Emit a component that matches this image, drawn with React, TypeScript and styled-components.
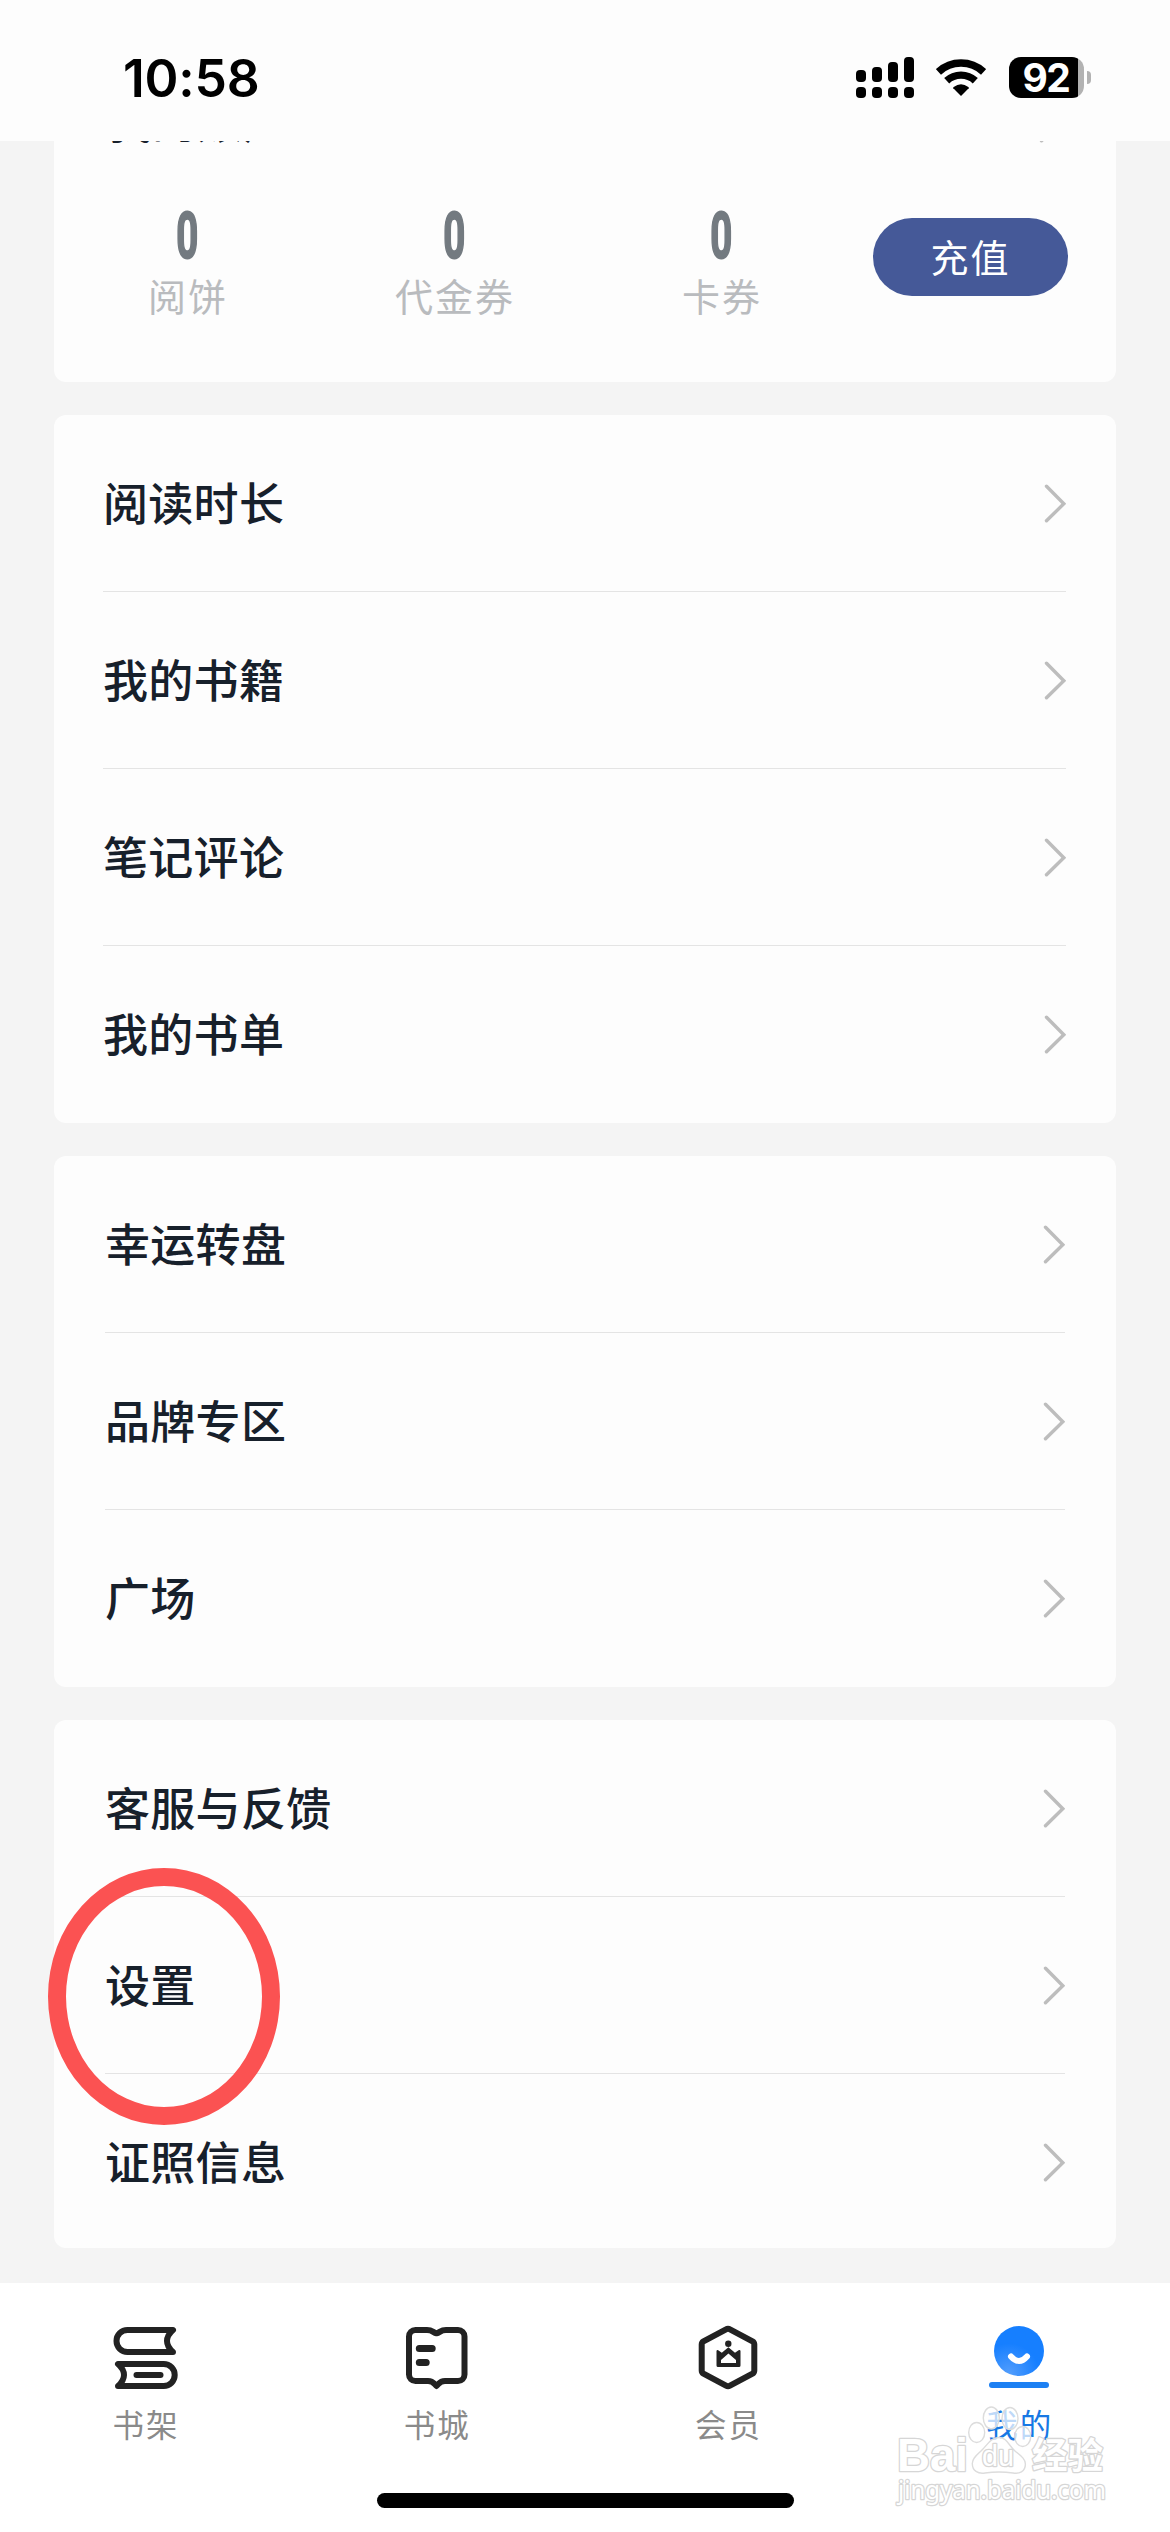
import React from 'react';
import styled, { createGlobalStyle } from 'styled-components';

const GlobalStyle = createGlobalStyle`
  * { box-sizing: border-box; }
  body {
    margin: 0;
    background: #f4f4f4;
    font-family: "Noto Sans CJK SC", "Noto Sans", sans-serif;
  }
`;

const Screen = styled.div`
  position: relative;
  display: flex;
  flex-direction: column;
  width: 1170px;
  height: 2532px;
  overflow: hidden;
  background: #f4f4f4;
`;

const StatusBar = styled.header`
  display: flex;
  flex: none;
  align-items: flex-start;
  justify-content: space-between;
  height: 141px;
  padding: 57px 79px 0 123px;
  background: #fdfdfd;
`;

const Clock = styled.time`
  padding-top: 1px;
  font: 600 51.5px/41px Inter, sans-serif;
  letter-spacing: -0.2px;
  color: #000;
`;

const StatusIcons = styled.div`
  display: flex;
  align-items: flex-start;
`;

const SignalIcon = styled.svg`
  display: block;
  margin-right: 22px;
`;

const WifiIcon = styled.svg`
  display: block;
  margin: 2px 23px 0 0;
`;

const Battery = styled.div`
  display: flex;
  align-items: center;
  gap: 3px;
`;

const BatteryBody = styled.div`
  width: 75px;
  height: 41px;
  padding-right: 1px;
  border-radius: 12px;
  background: linear-gradient(90deg, #000 69px, #b2b2b2 69px);
  color: #fff;
  font: 700 39px/41px Inter, sans-serif;
  letter-spacing: -1.5px;
  text-align: center;
`;

const BatteryTip = styled.div`
  width: 4px;
  height: 13px;
  border-radius: 0 6px 6px 0;
  background: #b2b2b2;
`;

const Feed = styled.main`
  flex: 1;
  min-height: 0;
  overflow: hidden;
`;

const CardStack = styled.div`
  display: flex;
  flex-direction: column;
  gap: 33px;
  margin-top: -106px;
  padding: 0 54px;
`;

const Card = styled.section<{ $height: number; $left: number; $right: number }>`
  flex: none;
  height: ${(p) => p.$height}px;
  padding: 0 ${(p) => p.$right}px 0 ${(p) => p.$left}px;
  overflow: hidden;
  border-radius: 12px;
  background: #fdfdfd;
`;

const Row = styled.div`
  display: flex;
  align-items: center;
  justify-content: space-between;
  height: 177px;
  border-bottom: 1px solid #e4e4e4;

  &:last-child {
    border-bottom-color: transparent;
  }
`;

const AccountHeader = styled(Row)`
  padding: 0 55px 0 53px;
  border-bottom-color: transparent;
`;

const RowTitle = styled.span<{ $lift?: number }>`
  padding-bottom: ${(p) => p.$lift ?? 3}px;
  font-size: 45px;
  font-weight: 500;
  line-height: 60px;
  letter-spacing: 0.3px;
  color: #17202b;
`;

const ChevronIcon = styled.svg`
  display: block;
  flex: none;
`;

const Stats = styled.div`
  display: flex;
  align-items: flex-start;
`;

const Stat = styled.div`
  display: flex;
  flex-direction: column;
  align-items: center;
  width: 267px;
`;

const StatValue = styled.span`
  height: 48px;
  padding-top: 1px;
  font: 700 64px/48px Roboto, sans-serif;
  color: #737a80;
  -webkit-text-stroke: 2px #737a80;
  transform: scaleX(0.6);
`;

const StatLabel = styled.span`
  margin-top: 11px;
  font-size: 38px;
  font-weight: 400;
  line-height: 48px;
  letter-spacing: 2px;
  margin-right: -1px;
  color: #b9bbbe;
`;

const TopUpButton = styled.button`
  width: 195px;
  height: 78px;
  margin: 6px 0 0 18px;
  padding: 0 0 2px;
  border: 0;
  border-radius: 39px;
  background: #455998;
  color: #fff;
  font: 400 38px/76px "Noto Sans CJK SC", sans-serif;
  letter-spacing: 2px;
`;

const TabBar = styled.nav`
  display: flex;
  flex: none;
  height: 210px;
  padding-right: 5px;
  background: #fff;
`;

const Tab = styled.a<{ $active?: boolean }>`
  display: flex;
  flex: 1;
  flex-direction: column;
  align-items: center;
  padding-top: 41px;
  color: ${(p) => (p.$active ? '#1778e4' : '#8a8a8a')};
`;

const TabIcon = styled.svg`
  display: block;
  flex: none;
`;

const TabLabel = styled.span`
  margin-top: 11px;
  font-size: 31.5px;
  font-weight: 400;
  line-height: 40px;
  letter-spacing: 2px;
  margin-right: -1px;
`;

const HomeArea = styled.footer`
  display: flex;
  flex: none;
  justify-content: center;
  height: 39px;
  background: #fff;
`;

const HomeIndicator = styled.div`
  width: 417px;
  height: 15px;
  border-radius: 8px;
  background: #000;
`;

const Highlight = styled.div`
  position: absolute;
  left: 48px;
  top: 1868px;
  width: 232px;
  height: 257px;
  border: 18px solid #fb5252;
  border-radius: 50%;
`;

const Watermark = styled.svg`
  position: absolute;
  left: 890px;
  top: 2400px;
`;

const Chevron = () => (
  <ChevronIcon width="22" height="40" viewBox="0 0 22 40" fill="none">
    <path d="M2.5 3.300 L19.800 20.800 L2.500 37.800" stroke="#bdbdbd" strokeWidth="3.400" strokeLinecap="round" />
  </ChevronIcon>
);

const bars = [
  { x: 0, top: 13 },
  { x: 16, top: 10 },
  { x: 32, top: 5 },
  { x: 48, top: 0 },
];

const Signal = () => (
  <SignalIcon width="58" height="41" viewBox="0 0 58 41">
    {bars.map((b) => (
      <g key={b.x}>
        <rect x={b.x} y={b.top} width="10" height={25 - b.top} rx="4" />
        <rect x={b.x} y="30" width="10" height="11" rx="4" />
      </g>
    ))}
  </SignalIcon>
);

const Wifi = () => (
  <WifiIcon width="50" height="38" viewBox="0 0 50 38" fill="none">
    <path d="M2.4 12.9 A33.2 33.2 0 0 1 47.6 12.9" stroke="#000" strokeWidth="7.6" />
    <path d="M10.7 21.7 A21 21 0 0 1 39.3 21.7" stroke="#000" strokeWidth="7.4" />
    <path d="M25 37 L17.3 29.3 Q16.9 28.6 17.7 28 Q25 22.6 32.3 28 Q33.1 28.6 32.7 29.3 Z" fill="#000" />
  </WifiIcon>
);

const ShelfIcon = () => (
  <TabIcon width="67" height="68" viewBox="0 -2 67 68" fill="none" stroke="#222" strokeWidth="6" strokeLinejoin="round" strokeLinecap="round">
    <path d="M61 4 H15.5 a11 11 0 0 0 0 22 H61 C53 19 53 11 61 4 Z" />
    <path d="M6 38 H51.7 a11 11 0 0 1 0 22 H6 C14 53 14 45 6 38 Z" />
    <path d="M24.5 49 H48.5" />
  </TabIcon>
);

const StoreIcon = () => (
  <TabIcon width="65" height="68" viewBox="0 -2 65 68" fill="none" stroke="#222" strokeWidth="6" strokeLinejoin="round" strokeLinecap="round">
    <path d="M32.5 7.3 C29 6.5 28.5 4 23 4 H11.5 A6.5 6.5 0 0 0 5 10.5 V48.5 A6.5 6.5 0 0 0 11.5 55 H24 C29 55 29.5 57 32.5 60 C35.5 57 36 55 41 55 H54 A6.5 6.5 0 0 0 60.5 48.5 V10.5 A6.5 6.5 0 0 0 54 4 H42 C36.5 4 36 6.5 32.5 7.3 Z" />
    <path d="M15.3 22.5 H28.2 M15.3 36.5 H22.2" strokeWidth="7" />
  </TabIcon>
);

const MemberIcon = () => (
  <TabIcon width="64" height="68" viewBox="0 0 64 68" fill="none">
    <path
      d="M30 5.4 Q32 4.2 34 5.4 L56.5 17.3 Q58.3 18.4 58.3 20.5 V46.5 Q58.3 48.6 56.5 49.7 L34 61.7 Q32 62.8 30 61.7 L7.5 49.7 Q5.7 48.6 5.7 46.5 V20.5 Q5.7 18.4 7.5 17.3 Z"
      stroke="#222"
      strokeWidth="6"
    />
    <circle cx="32.3" cy="19.7" r="3.2" fill="#222" />
    <path
      d="M20.5 27 Q20.8 25.6 22.2 26.2 L25.8 28.8 L32.4 23.2 L39 28.8 L42.6 26.2 Q44.3 25.6 44.5 27 V41.5 Q44.5 43 43 43 H22 Q20.5 43 20.5 41.5 Z M32.4 29.5 L25 36 V39 H40 V36 Z"
      fill="#222"
      fillRule="evenodd"
    />
  </TabIcon>
);

const ProfileIcon = () => (
  <TabIcon width="62" height="68" viewBox="0 0 62 68" fill="none">
    <defs>
      <radialGradient id="face" cx="0.3" cy="0.95" r="0.6">
        <stop offset="0" stopColor="#529dfc" />
        <stop offset="1" stopColor="#167fff" />
      </radialGradient>
    </defs>
    <circle cx="31" cy="27" r="25" fill="url(#face)" />
    <path d="M23 32.5 Q31 41.5 39 32.5" stroke="#fff" strokeWidth="6" strokeLinecap="round" />
    <rect x="1" y="58" width="60" height="6" rx="3" fill="#1d80f3" />
  </TabIcon>
);

const BaiduMark = () => (
  <Watermark width="230" height="115" viewBox="890 2400 230 115">
    <g fill="#fff" fillOpacity="0.72" stroke="#dcdcdc" strokeWidth="1.4">
      <ellipse cx="976.7" cy="2432.5" rx="8" ry="10" />
      <ellipse cx="991.3" cy="2418" rx="8" ry="11" />
      <ellipse cx="1010" cy="2418.5" rx="8" ry="11" />
      <ellipse cx="1022.7" cy="2436.5" rx="8" ry="10" />
      <path d="M999 2437.5 C1007 2437.5 1009 2446 1015 2451 C1021 2456 1025.4 2459 1025.4 2464 C1025.4 2472 1019 2474 1013 2473 C1003 2471.5 995 2471.5 985 2473 C978 2474 972.3 2471 972.3 2463.5 C972.3 2458 977 2455 982 2450 C988 2444 991 2437.5 999 2437.5 Z" />
    </g>
    <g fill="#fff" stroke="#d6d6d6" strokeWidth="2.6" paintOrder="stroke" strokeLinejoin="round">
      <text x="897" y="2471" fontFamily="Liberation Sans, sans-serif" fontWeight="700" fontSize="47" textLength="71" lengthAdjust="spacingAndGlyphs">Bai</text>
      <text x="982" y="2466" fontFamily="Liberation Sans, sans-serif" fontWeight="400" fontSize="29" textLength="32" lengthAdjust="spacingAndGlyphs">du</text>
      <text x="1032" y="2469" fontFamily="Noto Sans CJK SC, sans-serif" fontWeight="700" fontSize="36" textLength="71" lengthAdjust="spacingAndGlyphs">经验</text>
      <text x="898" y="2499" fontFamily="Noto Sans, sans-serif" fontWeight="400" fontSize="25" textLength="208" lengthAdjust="spacingAndGlyphs">jingyan.baidu.com</text>
    </g>
  </Watermark>
);

const stats = [
  { label: '阅饼', value: 0 },
  { label: '代金券', value: 0 },
  { label: '卡券', value: 0 },
];

const groups = [
  { height: 708, left: 49, right: 50, items: ['阅读时长', '我的书籍', '笔记评论', '我的书单'] },
  { height: 531, left: 51, right: 51, items: ['幸运转盘', '品牌专区', '广场'] },
  { height: 528, left: 51, right: 51, items: ['客服与反馈', '设置', '证照信息'] },
];

const tabs = [
  { label: '书架', Icon: ShelfIcon },
  { label: '书城', Icon: StoreIcon },
  { label: '会员', Icon: MemberIcon },
  { label: '我的', Icon: ProfileIcon, active: true },
];

export default function App() {
  return (
    <>
      <GlobalStyle />
      <Screen>
        <StatusBar>
          <Clock>10:58</Clock>
          <StatusIcons>
            <Signal />
            <Wifi />
            <Battery>
              <BatteryBody>92</BatteryBody>
              <BatteryTip />
            </Battery>
          </StatusIcons>
        </StatusBar>
        <Feed>
          <CardStack>
            <Card $height={347} $left={0} $right={0}>
              <AccountHeader>
                <RowTitle $lift={7}>我的账户</RowTitle>
                <Chevron />
              </AccountHeader>
              <Stats>
                {stats.map((s) => (
                  <Stat key={s.label}>
                    <StatValue>{s.value}</StatValue>
                    <StatLabel>{s.label}</StatLabel>
                  </Stat>
                ))}
                <TopUpButton>充值</TopUpButton>
              </Stats>
            </Card>
            {groups.map((g) => (
              <Card key={g.items[0]} $height={g.height} $left={g.left} $right={g.right}>
                {g.items.map((item) => (
                  <Row key={item}>
                    <RowTitle>{item}</RowTitle>
                    <Chevron />
                  </Row>
                ))}
              </Card>
            ))}
          </CardStack>
        </Feed>
        <TabBar>
          {tabs.map(({ label, Icon, active }) => (
            <Tab key={label} $active={active}>
              <Icon />
              <TabLabel>{label}</TabLabel>
            </Tab>
          ))}
        </TabBar>
        <HomeArea>
          <HomeIndicator />
        </HomeArea>
        <Highlight />
        <BaiduMark />
      </Screen>
    </>
  );
}
